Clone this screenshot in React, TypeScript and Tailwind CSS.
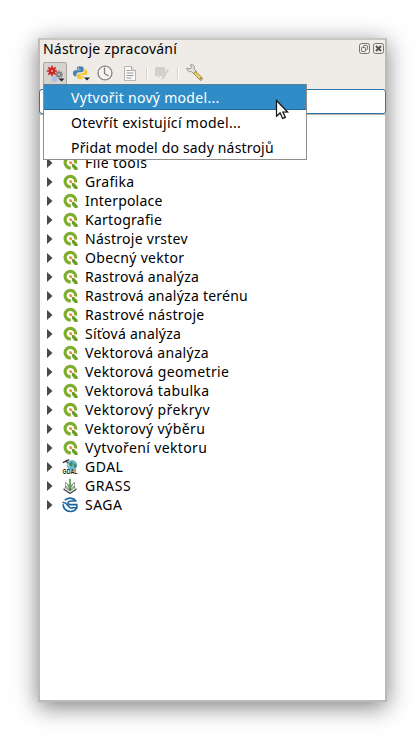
import React from 'react';

type Provider = 'qgis' | 'gdal' | 'grass' | 'saga';

const rows: { label: string; icon: Provider; tracking: string }[] = [
  { label: 'File tools', icon: 'qgis', tracking: 'tracking-[0.4px]' },
  { label: 'Grafika', icon: 'qgis', tracking: 'tracking-[0.3px]' },
  { label: 'Interpolace', icon: 'qgis', tracking: 'tracking-[0.2px]' },
  { label: 'Kartografie', icon: 'qgis', tracking: 'tracking-[0.27px]' },
  { label: 'Nástroje vrstev', icon: 'qgis', tracking: 'tracking-[0.27px]' },
  { label: 'Obecný vektor', icon: 'qgis', tracking: 'tracking-[0.3px]' },
  { label: 'Rastrová analýza', icon: 'qgis', tracking: 'tracking-[0.25px]' },
  { label: 'Rastrová analýza terénu', icon: 'qgis', tracking: 'tracking-[0.24px]' },
  { label: 'Rastrové nástroje', icon: 'qgis', tracking: 'tracking-[0.3px]' },
  { label: 'Síťová analýza', icon: 'qgis', tracking: 'tracking-[0.25px]' },
  { label: 'Vektorová analýza', icon: 'qgis', tracking: 'tracking-[0.3px]' },
  { label: 'Vektorová geometrie', icon: 'qgis', tracking: 'tracking-[0.35px]' },
  { label: 'Vektorová tabulka', icon: 'qgis', tracking: 'tracking-[0.35px]' },
  { label: 'Vektorový překryv', icon: 'qgis', tracking: 'tracking-[0.4px]' },
  { label: 'Vektorový výběru', icon: 'qgis', tracking: 'tracking-[0.4px]' },
  { label: 'Vytvoření vektoru', icon: 'qgis', tracking: 'tracking-[0.37px]' },
  { label: 'GDAL', icon: 'gdal', tracking: 'tracking-[0.5px]' },
  { label: 'GRASS', icon: 'grass', tracking: 'tracking-[0.6px]' },
  { label: 'SAGA', icon: 'saga', tracking: 'tracking-[0.5px]' },
];

function QgisIcon() {
  return (
    <svg width="16" height="16" viewBox="0 0 16 16" fill="none">
      <path d="M8.800 12.900A5.300 5.300 0 1 1 13.600 8.500" stroke="#7fae2e" strokeWidth="3.200" />
      <path d="M10 9h2l3.600 3.800v2.100h-2.800L10 11.800z" fill="#6b9f2a" />
      <path d="M7.200 6.300h2l1.100 1.200-.2 1.700H8.500L7.200 8z" fill="#f08a3c" />
    </svg>
  );
}

function GdalIcon() {
  return (
    <svg width="16" height="16" viewBox="0 0 16 16">
      <circle cx="10" cy="6.200" r="5.200" fill="#62b6cc" />
      <path d="M7.500 4l2.500-1.500 1 2.500-1.500 2.500-2-1zM12 4.500l2.500 1-.5 3H12z" fill="#49885c" />
      <path d="M.8 3.600L7.200.6M3.800 1l1.800 3.200" stroke="#333" strokeWidth="1.300" />
      <path d="M5.500 4.500l1.800 4" stroke="#d6edf2" strokeWidth=".8" />
      <text x=".6" y="14.800" textLength="14.800" lengthAdjust="spacingAndGlyphs" fontFamily="Liberation Sans, sans-serif" fontWeight="bold" fontSize="7.500" fill="#111" stroke="#fff" strokeWidth=".3" paintOrder="stroke">GDAL</text>
    </svg>
  );
}

function GrassIcon() {
  return (
    <svg width="16" height="16" viewBox="0 0 16 16" fill="none">
      <path d="M8 6l6.500 5L8 15.300 1.500 11z" fill="#f3f4f1" stroke="#999" strokeWidth=".9" />
      <path d="M1.700 11.300L8 15.400l6.300-4.100" stroke="#444" strokeWidth="1.200" />
      <path d="M3.500 4.500v5.500L8 13l4.500-3V4.500" stroke="#87917f" strokeWidth=".8" />
      <path d="M8 12.500V.8" stroke="#6bab5c" strokeWidth="2" />
      <path d="M7.700 12.300C7.200 8.500 6 6 3.700 4.500M8.300 12.300C8.800 8.500 10 6 12.300 4.500M8 12.500L4 8.500M8 12.500l4-4" stroke="#4a7d40" strokeWidth=".9" />
    </svg>
  );
}

function SagaIcon() {
  return (
    <svg width="16" height="16" viewBox="0 0 16 16" fill="none" stroke="#1c659f">
      <path d="M13.800 3.700C11 .3 5.500.2 2.800 3.300M1.200 7.200c-.1 4.200 3 7.300 7 7.300 3 0 5.500-1.500 6.500-4" strokeWidth="1.700" />
      <path d="M14.500 4H9.300C5.500 4 5 6.900 8 7.600h6.800v3.200H10" strokeWidth="1.600" />
      <path d="M.5 5.600c2.500-.3 4 .8 5 2.400s2 3.300 5 3.300" strokeWidth="1.600" />
    </svg>
  );
}

const providerIcons: Record<Provider, React.ReactNode> = {
  qgis: <QgisIcon />,
  gdal: <GdalIcon />,
  grass: <GrassIcon />,
  saga: <SagaIcon />,
};

function ModelIcon() {
  return (
    <svg width="22" height="20" viewBox="0 0 22 20" fill="none">
      <path d="M8 1.800v10.400M2.800 7h10.400M4.300 3.300l7.400 7.400M11.700 3.300l-7.400 7.400" stroke="#cf2929" strokeWidth="1.700" />
      <circle cx="8" cy="7" r="3.400" fill="#d02525" />
      <circle cx="8" cy="7" r="1" fill="#e6b8b5" />
      <path d="M15 6.500v8M11 10.500h8M12.200 7.700l5.600 5.600M17.800 7.700l-5.600 5.600" stroke="#808080" strokeWidth="1.300" />
      <circle cx="15" cy="10.500" r="2.600" fill="#808080" />
      <circle cx="15" cy="10.500" r="1" fill="#d6d2ce" />
      <circle cx="10.500" cy="15" r="2.500" fill="#a9bce0" stroke="#b3c3e2" strokeWidth="1.500" strokeDasharray="1.500 .7" />
      <path d="M14.500 14.500h6l-3 3z" fill="#222" />
    </svg>
  );
}

function PythonIcon() {
  return (
    <svg width="22" height="20" viewBox="0 0 22 20">
      <g transform="translate(.3 .5) scale(.9)">
        <path d="M8.500 2C6 2 5 3 5 4.300v1.500h4v.7H3.200C1.500 6.500.8 8 .8 9.800s.8 3.200 2.200 3.200h1.600v-2c0-1.400 1-2.500 2.500-2.500h3.500c1.200 0 2-.9 2-2V4.300C12.600 2.800 11 2 8.500 2z" fill="#4584b6" />
        <path d="M9 16.300c2.500 0 3.700-.9 3.700-2.300v-1.500h-4v-.7h5.700c1.700 0 2.300-1.500 2.300-3.300s-.8-3-2.200-3h-1.200v1.800c0 1.500-1 2.600-2.500 2.600H7.300c-1.300 0-2.200.9-2.200 2.100v2c0 1.500 1.400 2.300 3.900 2.300z" fill="#f5c833" />
        <circle cx="6.800" cy="4.200" r=".7" fill="#fff" />
        <circle cx="10.800" cy="14.200" r=".7" fill="#fff" />
      </g>
      <path d="M12 13.500h6l-3 3z" fill="#222" />
    </svg>
  );
}

function ClockIcon() {
  return (
    <svg width="18" height="18" viewBox="0 0 18 18" fill="none" stroke="#808080">
      <circle cx="9" cy="9" r="7" fill="#f6f5f3" strokeWidth="1.200" />
      <path d="M8.500 3.500v6l4 2.500" strokeWidth="1.300" />
      <path d="M9 2v1M9 15v1M2 9h1M15 9h1" strokeWidth=".7" />
    </svg>
  );
}

function DocumentIcon() {
  return (
    <svg width="18" height="18" viewBox="0 0 18 18" fill="none">
      <path d="M3.500 2.500h7l4 4v10h-11z" fill="#fafafa" stroke="#b8b5b0" />
      <path d="M10.500 2.500v4h4" fill="#e4e2df" stroke="#aaa" />
      <path d="M5.500 6.500h4M5.500 9h7M5.500 11.500h7M5.500 14h5" stroke="#999" strokeWidth="1.200" />
    </svg>
  );
}

function EditIcon() {
  return (
    <svg width="18" height="18" viewBox="0 0 18 18">
      <path d="M2 3h10v9H7l-2 2v-2H2z" fill="#d3d1c5" />
      <path d="M14.300 5l1.500 1-5 8.500-2 1 .3-2.200z" fill="#cfcdc6" stroke="#dedbd5" strokeWidth=".6" />
    </svg>
  );
}

function WrenchIcon() {
  return (
    <svg width="18" height="18" viewBox="0 0 18 18">
      <path d="M1 4l3 1 1.500-1.500L4.500.8C7.500 0 9 2.500 8 5l3 3-2.500 2.500-3-3C3 8.500.7 6.500 1 4z" fill="#e2e2de" stroke="#8b8b87" strokeWidth=".9" />
      <path d="M9.500 7.500l6.500 6c1.500 1.500-.8 3.800-2.300 2.300l-6-6.500z" fill="#efd35a" stroke="#8c7938" strokeWidth=".8" />
      <circle cx="14.500" cy="14.500" r=".8" fill="#666" />
    </svg>
  );
}

function WindowButtons() {
  return (
    <svg className="-mt-[3px]" width="27" height="13" viewBox="0 0 27 13" fill="none" stroke="#77736e">
      <rect x="1.500" y="1.500" width="10" height="10" rx="2" />
      <rect x="5.500" y="3.500" width="4" height="4" rx=".7" />
      <rect x="3.500" y="5.500" width="4" height="4" rx=".7" fill="#efebe7" />
      <rect x="15.500" y="1.500" width="10" height="10" rx="2" />
      <path d="M18 4l5 5M23 4l-5 5" stroke="#55514d" strokeWidth="1.900" />
    </svg>
  );
}

export default function App() {
  return (
    <div className="relative h-[740px] w-[419px] overflow-hidden bg-white px-[38px] pt-[38px] font-['Noto_Sans',sans-serif] text-[14px] text-black">
      <div className="flex h-[664px] w-[349px] flex-col border-2 border-[#bfbab6] border-t-[#c9c5c0] bg-[#efebe7] shadow-[0_5px_22px_0_rgba(0,0,0,0.5)]">
        <div className="flex h-[20px] items-center justify-between pl-[3px]">
          <span className="-mt-[2px] whitespace-nowrap leading-[20px] tracking-[0.21px]">Nástroje zpracování</span>
          <WindowButtons />
        </div>
        <div className="flex h-[29px] items-start pt-[2px]">
          <div className="ml-[3px] flex h-[23px] w-[24px] items-center justify-center rounded-[2px] border border-[#aaa6a2] bg-[#d6d2ce]"><ModelIcon /></div>
          <div className="ml-[5px] mt-[2px]"><PythonIcon /></div>
          <div className="ml-[2px] mt-[2px]"><ClockIcon /></div>
          <div className="ml-[7px] mt-[2px]"><DocumentIcon /></div>
          <div className="ml-[7px] mt-[6px] h-[11px] w-[2px] border-l border-[#d3cfcb] bg-white" />
          <div className="ml-[5px] mt-[2px]"><EditIcon /></div>
          <div className="ml-[6px] mt-[6px] h-[11px] w-[2px] border-l border-[#d3cfcb] bg-white" />
          <div className="ml-[7px] mt-[2px]"><WrenchIcon /></div>
        </div>
        <div className="-mx-px h-[25px] shrink-0 rounded-[3px] border border-[#2c76aa] bg-white" />
        <div className="flex grow flex-col border-t border-[#b5b1ad] bg-white pt-[38px]">
          {rows.map((row) => (
            <div key={row.label} className="flex h-[19px] items-center">
              <svg className="ml-[7px]" width="6" height="10" viewBox="0 0 6 10"><path d="M0 0l5.500 5L0 10z" fill="#484848" /></svg>
              <span className="ml-[9px] w-[16px]">{providerIcons[row.icon]}</span>
              <span className={`ml-[7px] whitespace-nowrap leading-[19px] ${row.tracking}`}>{row.label}</span>
            </div>
          ))}
        </div>
      </div>

      <div className="absolute left-[43px] top-[84px] h-[76px] w-[264px] border border-[#908d8a] border-t-[#5d7f96] bg-white">
        <div className="flex h-[25px] items-center border-b border-[#256c9e] bg-[#308cc6] pl-[27px] text-white"><span className="tracking-[0.3px]">Vytvořit nový model...</span></div>
        <div className="flex h-[25px] items-center pl-[27px]"><span className="tracking-[0.3px]">Otevřít existující model...</span></div>
        <div className="flex h-[24px] items-center pl-[27px]"><span className="tracking-[0.18px]">Přidat model do sady nástrojů</span></div>
      </div>

      <svg className="absolute left-[275px] top-[99px]" width="16" height="23" viewBox="0 0 16 23">
        <path d="M2.500 2.500v16l3.700-3.500 2.500 5.500 2.800-1.300-2.500-5.200h5z" fill="#888" opacity=".4" />
        <path d="M1.500 1.500v15.700l3.600-3.400 2.500 5.600 2.700-1.200-2.500-5.200h4.800z" fill="#fff" stroke="#111" strokeWidth="1.200" />
      </svg>
    </div>
  );
}
